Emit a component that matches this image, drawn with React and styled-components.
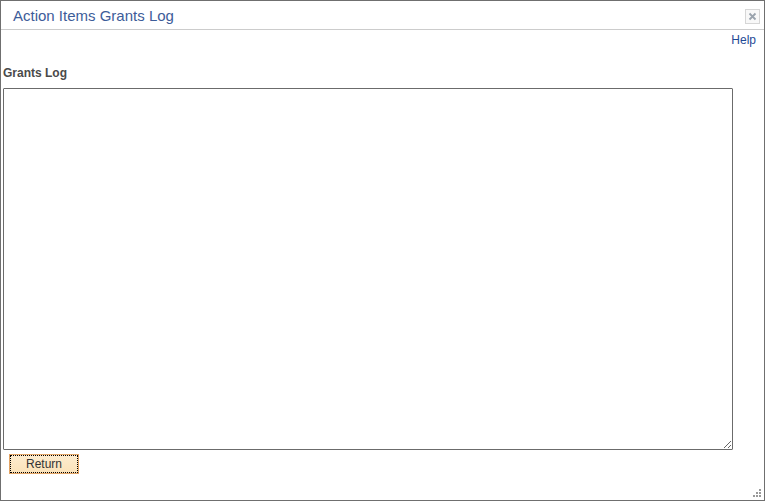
import styled, { createGlobalStyle } from 'styled-components';

const GlobalStyle = createGlobalStyle`
  html, body {
    margin: 0;
    padding: 0;
    background: #ffffff;
    font-family: Arial, "Liberation Sans", sans-serif;
  }
`;

const Modal = styled.div`
  position: relative;
  box-sizing: border-box;
  width: 765px;
  height: 501px;
  border: 1px solid #6f6f6f;
  background: #fff;
  display: flex;
  flex-direction: column;
`;

const Header = styled.div`
  height: 28px;
  border-bottom: 1px solid #cccccc;
  display: flex;
  align-items: center;
  justify-content: space-between;
  padding: 0 4px 0 12px;
`;

const Title = styled.span`
  font-size: 15px;
  color: #3d5c99;
`;

const CloseBox = styled.button`
  width: 15px;
  height: 15px;
  padding: 0;
  margin-top: 2px;
  border: 1px solid #d6d6d6;
  background: #f8f8f8;
  display: flex;
  align-items: center;
  justify-content: center;
`;

const Toolbar = styled.div`
  display: flex;
  justify-content: flex-end;
  padding: 3px 8px 0 0;
`;

const HelpLink = styled.a`
  font-size: 12px;
  color: #1f4a96;
  text-decoration: none;
`;

const Body = styled.div`
  display: flex;
  flex-direction: column;
  padding: 0 0 0 2px;
`;

const Label = styled.label`
  font-size: 12px;
  font-weight: bold;
  color: #4a4a4a;
  margin-top: 19px;
  height: 22px;
`;

const LogArea = styled.textarea`
  box-sizing: border-box;
  width: 730px;
  height: 362px;
  margin: 0;
  border: 1px solid #6b6b6b;
  border-radius: 1px;
  font-family: inherit;
  resize: both;
`;

const Actions = styled.div`
  padding: 4px 0 0 6px;
`;

const ReturnButton = styled.button`
  box-sizing: border-box;
  width: 70px;
  height: 20px;
  padding: 0;
  font-family: Arial, "Liberation Sans", sans-serif;
  font-size: 12px;
  color: #333;
  background: linear-gradient(#fdeccf, #fbe2b9);
  border: 1px solid #e3a566;
  outline: 1px dotted #000;
  outline-offset: -2px;
`;

const Grip = styled.svg`
  position: absolute;
  right: 2px;
  bottom: 2px;
`;

export default function App() {
  return (
    <>
      <GlobalStyle />
      <Modal>
        <Header>
          <Title>Action Items Grants Log</Title>
          <CloseBox aria-label="Close">
            <svg width="9" height="9" viewBox="0 0 9 9">
              <path d="M1.5 1.5l6 6M7.5 1.5l-6 6" stroke="#9aa3ad" strokeWidth="1.8" />
            </svg>
          </CloseBox>
        </Header>
        <Toolbar>
          <HelpLink href="#">Help</HelpLink>
        </Toolbar>
        <Body>
          <Label>Grants Log</Label>
          <LogArea />
          <Actions>
            <ReturnButton>Return</ReturnButton>
          </Actions>
        </Body>
        <Grip width="9" height="9" viewBox="0 0 9 9">
          <g fill="#999">
            <rect x="6" y="0" width="2" height="2" />
            <rect x="3" y="3" width="2" height="2" />
            <rect x="6" y="3" width="2" height="2" />
            <rect x="0" y="6" width="2" height="2" />
            <rect x="3" y="6" width="2" height="2" />
            <rect x="6" y="6" width="2" height="2" />
          </g>
        </Grip>
      </Modal>
    </>
  );
}
